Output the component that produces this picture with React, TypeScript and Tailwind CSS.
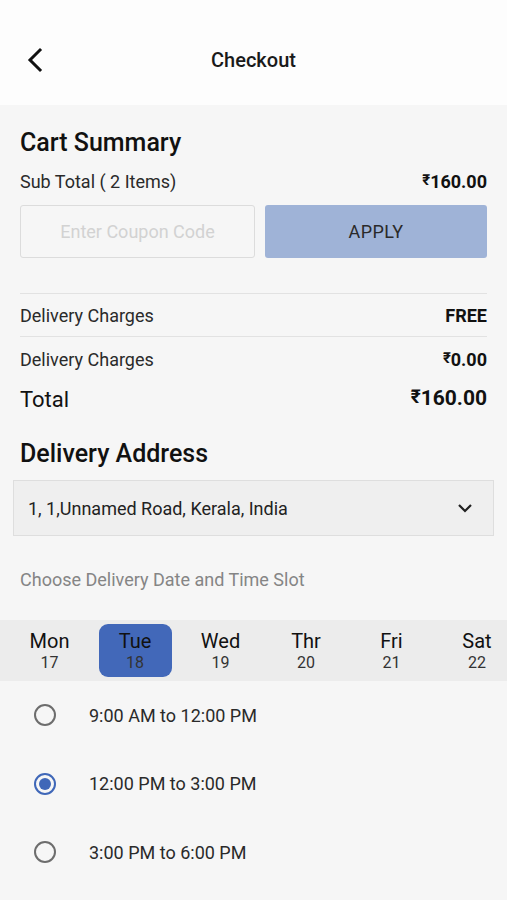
import { useState } from 'react';

const days = [
    { name: 'Mon', num: '17' },
    { name: 'Tue', num: '18' },
    { name: 'Wed', num: '19' },
    { name: 'Thr', num: '20' },
    { name: 'Fri', num: '21' },
    { name: 'Sat', num: '22' },
];

const slots = ['9:00 AM to 12:00 PM', '12:00 PM to 3:00 PM', '3:00 PM to 6:00 PM'];

function App() {
    const [day, setDay] = useState(1)
    const [slot, setSlot] = useState(1)

    return (
        <div className="min-h-[900px] w-[507px] bg-[#f6f6f6] text-[#1a1a1a] font-['Roboto',sans-serif]">
            {/* header */}
            <div className="flex h-[105px] items-center bg-[#fdfdfd] px-[25px] pt-[15px]">
                <svg width="22" height="26" viewBox="0 0 22 26" fill="none">
                    <path d="M15 3 L5 13 L15 23" stroke="#111" strokeWidth="3" strokeLinecap="square" />
                </svg>
                <p className="flex-1 pr-[22px] text-center text-[20px] font-medium text-[#1a1a1a]">Checkout</p>
            </div>

            <div className="px-[20px] pt-[22px]">
                <h2 className="text-[25px] font-medium leading-[32px] text-[#111]">Cart Summary</h2>
                <div className="mt-[11px] flex h-[24px] items-center justify-between text-[18px] leading-[24px]">
                    <span className="text-[#2a2a2a]">Sub Total ( 2 Items)</span>
                    <span className="font-bold text-[#111]"><span className="relative -top-[3px] text-[15px] leading-none">₹</span>160.00</span>
                </div>

                <div className="mt-[11px] flex gap-[10px]">
                    <input
                        className="h-[53px] w-[235px] rounded-[3px] border border-[#dcdcdc] bg-transparent text-center text-[18px] outline-none placeholder:text-[#d2d2d2]"
                        placeholder="Enter Coupon Code"
                    />
                    <button className="h-[53px] flex-1 rounded-[3px] bg-[#9fb3d7] text-[18px] tracking-wide text-[#2a2a2a]">
                        APPLY
                    </button>
                </div>

                <div className="mt-[35px] border-t border-[#e2e2e2]" />
                <div className="flex h-[42px] items-center justify-between text-[18px]">
                    <span className="text-[#2a2a2a]">Delivery Charges</span>
                    <span className="font-bold text-[#111]">FREE</span>
                </div>
                <div className="border-t border-[#e2e2e2]" />
                <div className="flex h-[44px] items-center justify-between text-[18px]">
                    <span className="text-[#2a2a2a]">Delivery Charges</span>
                    <span className="font-bold text-[#111]"><span className="relative -top-[3px] text-[15px] leading-none">₹</span>0.00</span>
                </div>
                <div className="flex h-[36px] items-center justify-between">
                    <span className="text-[22px] text-[#111]">Total</span>
                    <span className="text-[21px] font-bold text-[#111]"><span className="relative -top-[2px] text-[19px] leading-none">₹</span>160.00</span>
                </div>

                <h2 className="mt-[21px] text-[25px] font-medium leading-[32px] text-[#111]">Delivery Address</h2>
            </div>

            <div className="mx-[13px] mt-[10px] flex h-[56px] items-center justify-between border border-[#dedede] bg-[#efefef] pl-[14px] pr-[20px]">
                <span className="text-[18px] text-[#222]">1, 1,Unnamed Road, Kerala, India</span>
                <svg width="16" height="12" viewBox="0 0 16 12" fill="none">
                    <path d="M2 3 L8 9 L14 3" stroke="#222" strokeWidth="2.2" />
                </svg>
            </div>

            <p className="mt-[30px] px-[20px] text-[18px] text-[#858585]">Choose Delivery Date and Time Slot</p>

            <div className="mt-[27px] flex h-[61px] items-center bg-[#ececec] px-[13px]">
                {days.map((d, i) => (
                    <button
                        key={d.name}
                        onClick={() => setDay(i)}
                        className={`flex h-[53px] w-[73px] shrink-0 flex-col items-center justify-center rounded-[9px] mr-[12.5px] ${i === day ? 'bg-[#4268b9]' : ''}`}
                    >
                        <span className="text-[20px] leading-[24px] text-[#111]">{d.name}</span>
                        <span className="text-[16px] leading-[20px] text-[#333]">{d.num}</span>
                    </button>
                ))}
            </div>

            <div>
                {slots.map((s, i) => (
                    <div key={s} onClick={() => setSlot(i)} className="flex h-[68.5px] items-center pl-[34px]">
                        {i === slot ? (
                            <span className="flex h-[22px] w-[22px] items-center justify-center rounded-full border-2 border-[#3f67b8]">
                                <span className="h-[12px] w-[12px] rounded-full bg-[#3f67b8]" />
                            </span>
                        ) : (
                            <span className="h-[22px] w-[22px] rounded-full border-2 border-[#6d6d6d]" />
                        )}
                        <span className="ml-[33px] text-[18px] text-[#2a2a2a]">{s}</span>
                    </div>
                ))}
            </div>
        </div>
    );
};

export default App
